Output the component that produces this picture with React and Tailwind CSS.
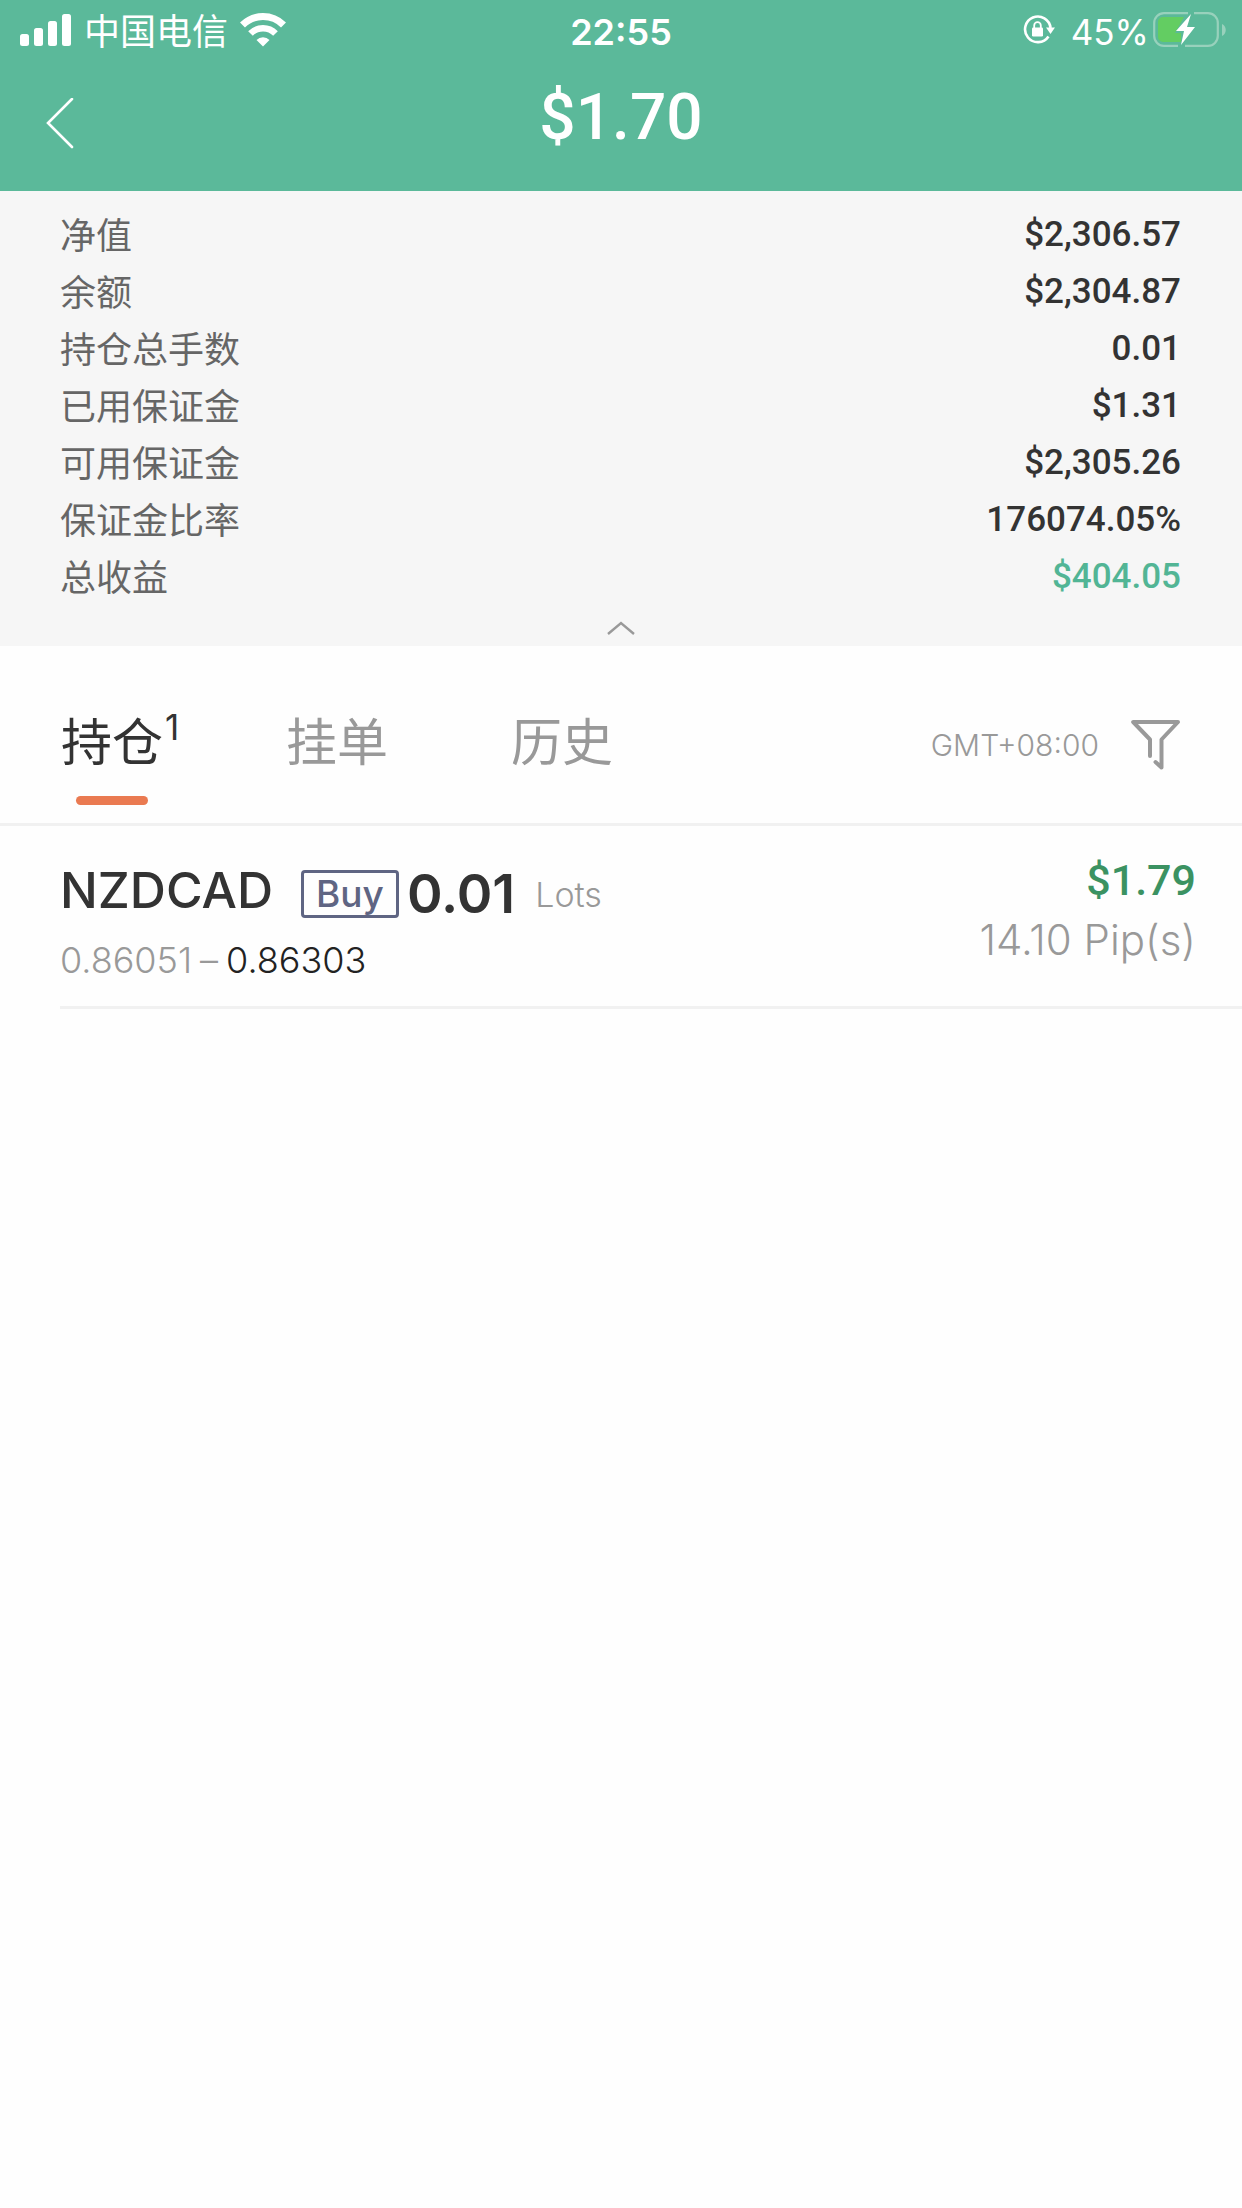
import React, { useState } from 'react'

const summary = [
	{ label: '净值', value: '$2,306.57' },
	{ label: '余额', value: '$2,304.87' },
	{ label: '持仓总手数', value: '0.01' },
	{ label: '已用保证金', value: '$1.31' },
	{ label: '可用保证金', value: '$2,305.26' },
	{ label: '保证金比率', value: '176074.05%' },
	{ label: '总收益', value: '$404.05', profit: true },
]

const tabs = [
	{ id: 'open', label: '持仓', count: 1 },
	{ id: 'pending', label: '挂单' },
	{ id: 'history', label: '历史' },
]

const positions = [
	{
		symbol: 'NZDCAD',
		side: 'Buy',
		lots: '0.01',
		openPrice: '0.86051',
		price: '0.86303',
		profit: '$1.79',
		pips: '14.10',
	},
]

function SignalIcon() {
	return (
		<svg width="52" height="32" viewBox="0 0 52 32" fill="currentColor" aria-hidden="true">
			<rect x="0" y="20" width="9" height="12" rx="2.5" />
			<rect x="14" y="14" width="9" height="18" rx="2.5" />
			<rect x="28" y="7" width="9" height="25" rx="2.5" />
			<rect x="42" y="0" width="9" height="32" rx="2.5" />
		</svg>
	)
}

function WifiIcon() {
	return (
		<svg width="46" height="34" viewBox="0 0 46 34" fill="none" stroke="currentColor" aria-hidden="true">
			<path d="M2.5 12 A29 29 0 0 1 43.5 12" strokeWidth="7" />
			<path d="M10.5 20.5 A17.5 17.5 0 0 1 35.5 20.5" strokeWidth="6.5" />
			<path d="M16.5 27 A9 9 0 0 1 29.5 27 L23 33.5 Z" fill="currentColor" stroke="none" />
		</svg>
	)
}

function RotationLockIcon() {
	return (
		<svg width="32" height="30" viewBox="0 0 32 30" fill="none" stroke="currentColor" aria-hidden="true">
			<path d="M25.5 21.5 A12.8 12.8 0 1 1 27.6 13" strokeWidth="2.6" />
			<path d="M23 12.5 H32 L27.5 19 Z" fill="currentColor" stroke="none" />
			<rect x="9" y="12.5" width="11" height="9" rx="1.2" fill="currentColor" stroke="none" />
			<path d="M11.2 13 V10.5 A3.3 3.3 0 0 1 17.8 10.5 V13" strokeWidth="1.8" />
		</svg>
	)
}

function BatteryIcon() {
	return (
		<svg width="74" height="36" viewBox="0 0 74 36" fill="none" aria-hidden="true">
			<path
				d="M35 1.2 H11 A9.8 9.8 0 0 0 1.2 11 V24 A9.8 9.8 0 0 0 11 33.8 H25 M32 33.8 H55 A9.8 9.8 0 0 0 64.8 24 V11 A9.8 9.8 0 0 0 55 1.2 H41"
				stroke="#98d1bc"
				strokeWidth="2.2"
			/>
			<path d="M69 12 C74 14 74 22 69 24 Z" fill="#98d1bc" />
			<path d="M31 5 H10 A5 5 0 0 0 5 10 V25 A5 5 0 0 0 10 30 H28 V21 H22 Z" fill="#63cd62" />
			<path d="M38 2 L23 19 H31 L28 33 L42 15 H34 Z" fill="white" />
		</svg>
	)
}

function FilterIcon() {
	return (
		<svg
			width="50"
			height="52"
			viewBox="0 0 50 52"
			fill="none"
			stroke="currentColor"
			strokeWidth="4"
			strokeLinecap="round"
			strokeLinejoin="round"
			aria-hidden="true"
		>
			<path d="M19 37 V20.5 L2.2 3 H47 L30.5 20.5 V48.5 L24.5 43" />
		</svg>
	)
}

function Header() {
	return (
		<header className="bg-[#5bb99a] text-white">
			<div className="grid grid-cols-[1fr_auto_1fr] items-center h-15">
				<div className="flex items-center gap-3 pl-5">
					<SignalIcon />
					<span className="pt-1 text-4xl font-normal">中国电信</span>
					<WifiIcon />
				</div>
				<time className="pt-1 text-4xl font-semibold">22:55</time>
				<div className="flex items-center justify-end pr-[15px]">
					<RotationLockIcon />
					<span className="pl-4 pr-1 pt-1 text-[35px]">45%</span>
					<BatteryIcon />
				</div>
			</div>
			<div className="grid grid-cols-[1fr_auto_1fr] items-center h-[131px] px-11 pb-4">
				<button aria-label="返回" className="w-8 pt-3">
					<svg width="30" height="52" viewBox="0 0 30 52" fill="none" stroke="currentColor" strokeWidth="2.6">
						<path d="M28 1 L4 25 L28 49" strokeLinecap="round" />
					</svg>
				</button>
				<h1 className="font-['Roboto',sans-serif] text-[64px] leading-none font-medium">$1.70</h1>
			</div>
		</header>
	)
}

function Summary() {
	return (
		<section className="flex flex-col bg-[#f6f6f6] pt-4">
			<dl className="pl-15 pr-[61px]">
				{summary.map((row) => (
					<div key={row.label} className="flex items-center justify-between h-[57px]">
						<dt className="text-4xl font-normal text-[#666]">{row.label}</dt>
						<dd
							className={
								row.profit
									? "font-['Roboto',sans-serif] text-[35px] font-medium text-[#52b595]"
									: "font-['Roboto',sans-serif] text-[35px] font-medium text-[#333]"
							}
						>
							{row.value}
						</dd>
					</div>
				))}
			</dl>
			<button aria-label="收起" className="flex items-center justify-center h-10 pt-1 text-[#999]">
				<svg width="28" height="14" viewBox="0 0 28 14" fill="none" stroke="currentColor" strokeWidth="2.4">
					<path d="M1 13 L14 2 L27 13" />
				</svg>
			</button>
		</section>
	)
}

function Tabs({ active, onSelect }) {
	return (
		<div className="flex items-end justify-between h-45 pl-[61px] pr-[61px] pb-[18px] border-b-3 border-[#f1f1f1]">
			<nav className="flex">
				{tabs.map((tab) => (
					<button
						key={tab.id}
						onClick={() => onSelect(tab.id)}
						className="relative flex w-[225px] h-32 pt-[30px] text-[51px] leading-[72px] font-normal"
					>
						<span className={tab.id === active ? 'text-[#333]' : 'text-[#999]'}>{tab.label}</span>
						{tab.count && (
							<sup className="top-0 pl-[2px] text-[35px] leading-10 text-[#333]">{tab.count}</sup>
						)}
						{tab.id === active && (
							<span className="absolute left-[15px] bottom-0 w-[72px] h-[9px] rounded-full bg-[#ea7a51]" />
						)}
					</button>
				))}
			</nav>
			<div className="flex items-center gap-8 h-32 pt-2 text-[#999]">
				<span className="text-3xl font-light">GMT+08:00</span>
				<button aria-label="筛选">
					<FilterIcon />
				</button>
			</div>
		</div>
	)
}

function Position({ position }) {
	return (
		<li className="flex justify-between h-[183px] ml-15 pr-[46px] border-b-3 border-[#f1f1f1]">
			<div className="flex flex-col pt-8">
				<div className="flex items-center h-[72px]">
					<span className="pb-2 text-[50px] leading-15 font-medium text-[#333]">{position.symbol}</span>
					<span className="flex items-center justify-center h-12 ml-7 px-3 border-3 border-[#5f6583] rounded-sm text-[37px] font-medium text-[#5f6583]">
						{position.side}
					</span>
					<span className="pl-2 text-[54px] leading-15 font-semibold text-[#333]">{position.lots}</span>
					<span className="pl-5 text-[34px] font-light text-[#999]">Lots</span>
				</div>
				<div className="flex items-center gap-2 h-15 text-4xl font-light">
					<span className="text-[#999]">{position.openPrice}</span>
					<span className="text-[#999]">–</span>
					<span className="text-[#222]">{position.price}</span>
				</div>
			</div>
			<div className="flex flex-col items-end pt-6 text-right">
				<span className="font-['Roboto',sans-serif] text-[43px] leading-15 font-medium text-[#3b9262]">
					{position.profit}
				</span>
				<span className="text-[42px] leading-15 font-light text-[#999]">{position.pips} Pip(s)</span>
			</div>
		</li>
	)
}

function App() {
	const [active, setActive] = useState('open')

	return (
		<div className="min-h-screen bg-[#fefefe] font-['Inter','Noto_Sans_CJK_SC',sans-serif]">
			<Header />
			<Summary />
			<main>
				<Tabs active={active} onSelect={setActive} />
				{active === 'open' && (
					<ul>
						{positions.map((position) => (
							<Position key={position.symbol} position={position} />
						))}
					</ul>
				)}
			</main>
		</div>
	)
}

export default App
